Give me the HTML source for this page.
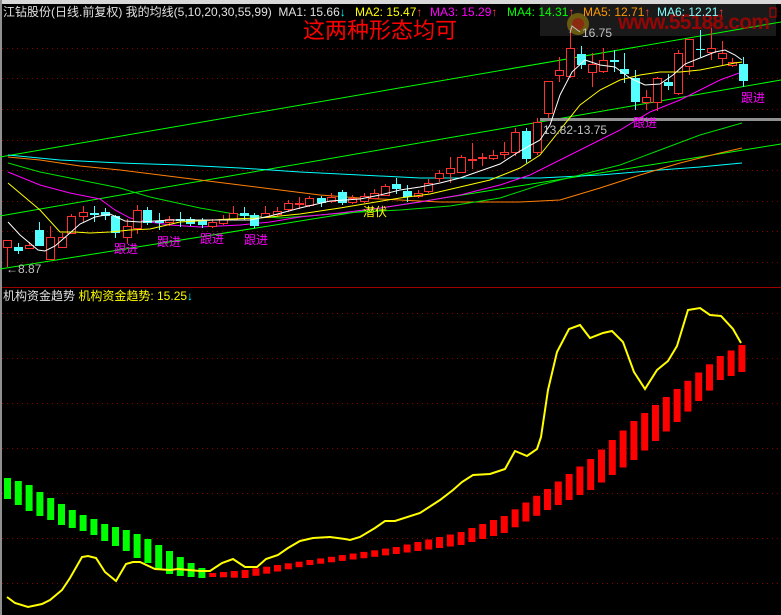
<!DOCTYPE html>
<html><head><meta charset="utf-8"><style>
html,body{margin:0;padding:0;background:#000;}
#w{position:relative;width:781px;height:615px;overflow:hidden;background:#000;font-family:"Liberation Sans","Noto Sans CJK SC",sans-serif;}
.t{position:absolute;white-space:nowrap;font-size:12px;line-height:14px;}
</style></head><body><div id="w">
<svg id="s" width="781" height="615" style="position:absolute;left:0;top:0"></svg>
<div class="t" style="left:618px;top:10px;font-size:21px;line-height:26px;font-weight:bold;letter-spacing:-0.8px;color:rgba(190,0,0,0.75);width:158px;overflow:hidden">www.55188.com</div>
<div class="t" style="left:3px;top:5px;color:#e0e0e0">江钻股份(日线.前复权) 我的均线(5,10,20,30,55,99)&nbsp; MA1: 15.66<span style="color:#00ffff">↓</span></div>
<div class="t" style="left:355px;top:5px;color:#ffff00">MA2: 15.47<span style="color:#ff4040">↑</span></div>
<div class="t" style="left:430px;top:5px;color:#ff00ff">MA3: 15.29<span style="color:#ff4040">↑</span></div>
<div class="t" style="left:507px;top:5px;color:#00ff00">MA4: 14.31<span style="color:#ff4040">↑</span></div>
<div class="t" style="left:583px;top:5px;color:#ff9900">MA5: 12.71<span style="color:#ff4040">↑</span></div>
<div class="t" style="left:657px;top:5px;color:#80ffff">MA6: 12.21<span style="color:#ff4040">↑</span></div>
<div class="t" style="left:303px;top:18px;font-size:22px;line-height:26px;color:#ff0000">这两种形态均可</div>
<div class="t" style="left:582px;top:26px;color:#c0c0c0">16.75</div>
<div class="t" style="left:543px;top:123px;color:#c0c0c0">13.82-13.75</div>
<div class="t" style="left:6px;top:262px;color:#c0c0c0">←8.87</div>
<div class="t" style="left:114px;top:242px;color:#ff00ff">跟进</div>
<div class="t" style="left:157px;top:235px;color:#ff00ff">跟进</div>
<div class="t" style="left:200px;top:232px;color:#ff00ff">跟进</div>
<div class="t" style="left:244px;top:233px;color:#ff00ff">跟进</div>
<div class="t" style="left:633px;top:116px;color:#ff00ff">跟进</div>
<div class="t" style="left:741px;top:91px;color:#ff00ff">跟进</div>
<div class="t" style="left:363px;top:205px;color:#ffff00">潜伏</div>
<div class="t" style="left:3px;top:289px;color:#e0e0e0">机构资金趋势 <span style="color:#ffff00">机构资金趋势: 15.25</span><span style="color:#00ffff">↓</span></div>
</div>
<script>
var s=document.getElementById('s'),h='';
h+='<rect x="0" y="0" width="781" height="4" fill="#d8d8d8"/><rect x="0" y="0" width="2" height="615" fill="#909090"/>';
h+='<rect x="540" y="4" width="236" height="32" fill="#1a1a1a"/><rect x="770" y="8" width="6" height="9" fill="none" stroke="#c00"/>';
h+='<circle cx="578" cy="24" r="11" fill="#6a5a10"/><circle cx="578" cy="24" r="6" fill="#8a2a10"/>';
[48,78,109,140,170,201,231,262,313,358,403,448,493,538,583].forEach(function(y){h+='<line x1="2" x2="781" y1="'+(y+.5)+'" y2="'+(y+.5)+'" stroke="#8a0000" stroke-dasharray="1,4"/>';});
h+='<line x1="2" x2="781" y1="287.5" y2="287.5" stroke="#a00000"/>';
function pl(p,c,w){h+='<polyline fill="none" stroke="'+c+'" stroke-width="'+(w||1)+'" points="'+p.map(function(a){return a.join(',')}).join(' ')+'"/>';}
pl([[0,157],[781,22]],'#00ff00');pl([[0,216],[781,80]],'#00ff00');pl([[0,269],[781,144]],'#00ff00');
h+='<rect x="540" y="118" width="241" height="3" fill="#909090"/>';
pl([[8,155],[60,160],[120,163],[180,165],[240,168],[300,172],[360,175],[420,178],[480,178],[540,178],[600,175],[660,170],[700,167],[742,163]],'#00ffff');
pl([[8,157],[40,160],[80,166],[120,170],[160,175],[200,180],[240,185],[280,190],[320,195],[360,198],[400,200],[440,202],[480,202],[520,202],[560,200],[600,188],[640,175],[680,163],[720,153],[742,148]],'#ff8000');
pl([[8,163],[40,172],[80,180],[120,188],[150,197],[200,208],[240,215],[280,218],[320,215],[360,212],[400,210],[450,206],[500,198],[540,185],[580,175],[620,165],[660,150],[700,135],[742,123]],'#00e000');
pl([[8,172],[40,185],[70,193],[100,199],[115,210],[130,218],[150,222],[170,225],[200,227],[240,225],[270,222],[300,217],[340,213],[380,208],[420,202],[460,195],[500,185],[530,175],[560,160],[590,145],[620,130],[650,112],[680,100],[700,90],[720,80],[742,72]],'#ff00ff');
var C=[[3,'r',240,247,240,267],[14,'c',247,251,243,254],[25,'r',245,248,242,249],[35,'c',230,246,222,246],[46,'r',237,259,226,259],[58,'r',237,247,233,247],[67,'r',216,233,214,233],[79,'r',212,216,206,222],[90,'c',213,215,206,222],[101,'c',212,216,208,220],[111,'c',216,233,215,238],[123,'r',226,237,219,243],[133,'r',210,228,205,234],[143,'c',210,223,207,225],[155,'c',221,223,213,230],[165,'r',219,222,216,226],[176,'c',219,221,212,227],[186,'c',219,224,217,226],[198,'c',220,225,218,228],[208,'r',222,226,219,228],[219,'r',219,223,215,225],[229,'r',213,219,206,220],[240,'c',213,216,207,220],[250,'c',215,226,213,228],[261,'r',213,217,206,218],[273,'r',211,214,207,216],[284,'r',203,209,200,212],[295,'r',203,204,197,209],[305,'r',198,205,196,207],[317,'c',198,203,196,207],[327,'r',197,201,193,203],[338,'c',192,203,190,205],[348,'r',198,202,195,204],[360,'r',196,201,193,203],[370,'r',193,198,189,199],[381,'r',186,195,184,196],[392,'c',184,189,178,194],[403,'c',191,197,185,202],[414,'r',193,196,190,198],[424,'r',183,191,179,193],[435,'r',173,178,170,182],[446,'r',168,173,157,183],[457,'r',157,172,155,173],[468,'r',159,160,143,169],[478,'r',157,158,153,166],[489,'r',155,158,150,160],[500,'r',152,154,142,159],[511,'r',132,152,128,156],[522,'c',131,159,128,163],[533,'r',122,152,118,155],[544,'r',81,113,81,118],[555,'r',70,75,57,82],[566,'r',48,76,28,78],[577,'c',54,65,46,69],[588,'r',64,72,53,87],[599,'r',60,71,48,73],[610,'c',60,62,50,72],[620,'c',69,74,53,83],[631,'c',78,102,70,110],[642,'r',97,102,90,110],[653,'r',78,102,77,111],[664,'c',82,86,74,90],[674,'r',53,93,50,95],[685,'r',39,66,39,75],[696,'c',49,50,30,57],[707,'r',48,52,28,60],[718,'r',53,58,41,65],[728,'r',62,65,58,67],[739,'c',64,81,57,87]];
C.forEach(function(c){var x=c[0],m=x+4.5,col=c[1]=='r'?'#ff3030':'#54ffff';
h+='<line x1="'+m+'" x2="'+m+'" y1="'+c[4]+'" y2="'+c[5]+'" stroke="'+col+'"/>';
var bh=Math.max(1,c[3]-c[2]);
if(c[1]=='r')h+='<rect x="'+(x+.5)+'" y="'+(c[2]+.5)+'" width="8" height="'+bh+'" fill="#000" stroke="'+col+'"/>';
else h+='<rect x="'+x+'" y="'+c[2]+'" width="9" height="'+bh+'" fill="'+col+'"/>';});
pl([[8,183],[40,210],[60,232],[75,232],[90,233],[110,232],[130,230],[150,229],[180,222],[230,219],[260,218],[300,214],[340,208],[370,203],[400,198],[430,194],[460,187],[490,180],[520,168],[540,155],[560,130],[580,105],[600,90],[620,80],[640,75],[660,72],[680,72],[700,70],[720,66],[735,63],[742,62]],'#ffff00');
pl([[8,222],[20,235],[38,250],[45,251],[55,246],[70,233],[80,224],[95,217],[110,214],[125,221],[140,222],[155,221],[170,220],[200,220],[230,220],[250,220],[270,216],[300,208],[330,201],[360,199],[380,195],[400,190],[420,187],[440,183],[460,178],[480,171],[500,164],[520,151],[540,140],[550,125],[560,95],[572,72],[585,60],[600,65],[615,67],[630,78],[645,85],[660,84],[673,75],[685,64],[700,58],[715,52],[725,50],[735,55],[742,60]],'#ffffff');
pl([[570,33],[572,26],[580,32]],'#c0c0c0');
function interp(k,i){for(var j=0;j<k.length-1;j++){if(i>=k[j][0]&&i<=k[j+1][0]){var f=(i-k[j][0])/(k[j+1][0]-k[j][0]);return k[j][1]+f*(k[j+1][1]-k[j][1]);}}return k[k.length-1][1];}
var G=[[478,499],[481,505],[485,511],[492,516],[498,520],[504,525],[510,528],[515,531],[519,535],[524,541],[527,546],[530,551],[534,558],[539,563],[545,569],[551,574],[557,576],[563,577],[568,578]];
var RT=[[19,573],[22,570],[28,560],[36,547],[42,532],[46,516],[50,489],[54,459],[58,421],[62,389],[66,356],[68,345]];
var RB=[[19,577],[22,578],[28,565],[36,554],[42,545],[46,533],[50,510],[54,490],[58,460],[62,422],[66,380],[68,372]];
for(var i=0;i<69;i++){var x=4+10.8*i,t,b,col;
if(i<19){t=G[i][0];b=G[i][1];col='#00ff00';}else{t=interp(RT,i);b=interp(RB,i);col='#ff0000';}
h+='<rect x="'+x.toFixed(1)+'" y="'+t.toFixed(1)+'" width="7" height="'+(b-t).toFixed(1)+'" fill="'+col+'"/>';}
pl([[7,597],[15,603],[28,607],[42,604],[50,600],[62,590],[70,578],[82,557],[88,556],[96,558],[105,572],[116,581],[126,564],[133,562],[140,562],[155,569],[170,570],[178,569],[200,571],[210,571],[222,563],[233,559],[245,567],[257,567],[266,559],[278,555],[288,548],[300,541],[313,538],[330,537],[345,539],[350,540],[360,537],[375,528],[385,521],[395,521],[420,513],[440,500],[453,490],[462,482],[473,475],[490,474],[505,469],[515,451],[527,456],[537,449],[541,437],[548,390],[557,352],[569,329],[580,325],[590,338],[603,333],[612,331],[623,342],[634,372],[645,389],[657,370],[668,361],[677,346],[688,310],[700,308],[710,315],[721,316],[733,329],[741,343]],'#ffff00',2);
s.innerHTML=h;
</script>
</body></html>
